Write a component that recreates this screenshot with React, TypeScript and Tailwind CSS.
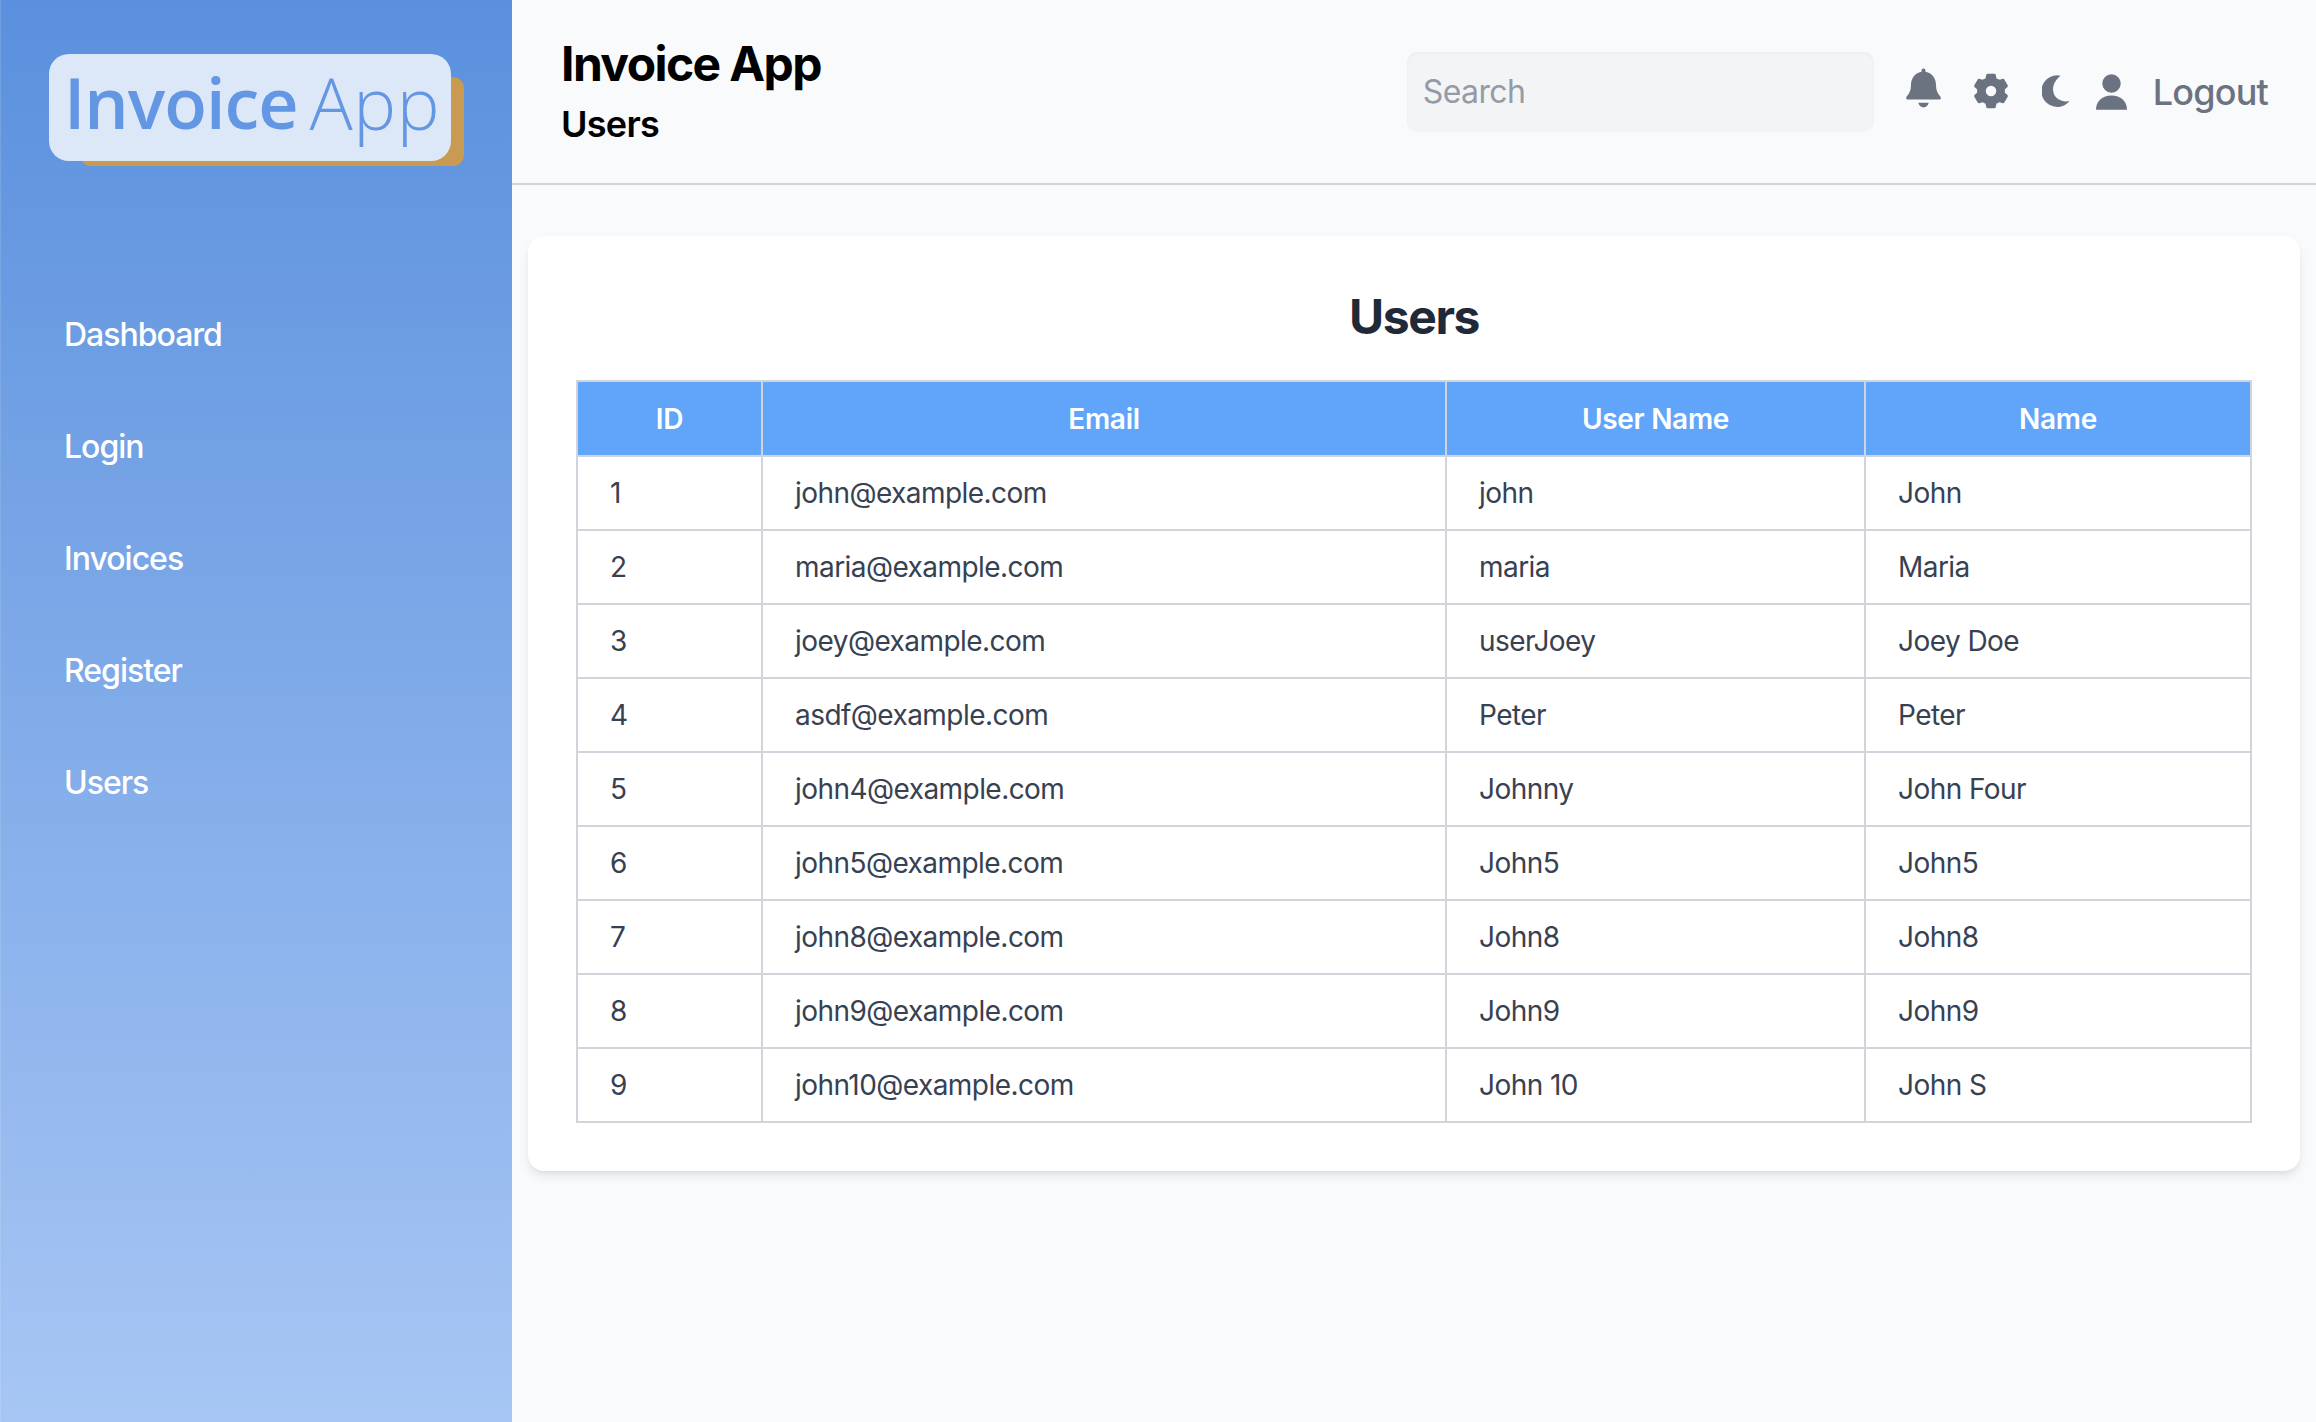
import React from "react";

const rows = [
  ["1", "john@example.com", "john", "John"],
  ["2", "maria@example.com", "maria", "Maria"],
  ["3", "joey@example.com", "userJoey", "Joey Doe"],
  ["4", "asdf@example.com", "Peter", "Peter"],
  ["5", "john4@example.com", "Johnny", "John Four"],
  ["6", "john5@example.com", "John5", "John5"],
  ["7", "john8@example.com", "John8", "John8"],
  ["8", "john9@example.com", "John9", "John9"],
  ["9", "john10@example.com", "John 10", "John S"],
];

const nav = ["Dashboard", "Login", "Invoices", "Register", "Users"];

function Bell() {
  return (
    <svg viewBox="47 38 106 120" className="w-[35px] h-[40px] fill-[#6b7280] mb-[7px]">
      <path d="M100 39a6 6 0 0 1 6 6v4c22 4 32 22 32 42c0 14 5 24 13 33c3 4 1 9-4 9H53c-5 0-7-5-4-9c8-9 13-19 13-33c0-20 10-38 32-42v-4a6 6 0 0 1 6-6z" />
      <path d="M84 143h32c-2 8-8 14-16 14s-14-6-16-14z" />
    </svg>
  );
}

function gearPath() {
  const c = 55;
  const pts: string[] = [];
  for (let i = 0; i < 6; i++) {
    const a = (i * 60 - 90) * (Math.PI / 180);
    const d = Math.PI / 180;
    const p = (r: number, o: number) =>
      `${(c + r * Math.cos(a + o * d)).toFixed(1)} ${(c + r * Math.sin(a + o * d)).toFixed(1)}`;
    pts.push(p(39, -20), p(50, -12), p(50, 12), p(39, 20));
  }
  return "M" + pts.join("L") + "Z";
}

function Gear() {
  return (
    <svg viewBox="0 0 110 110" className="w-[36px] h-[36px] mb-[2px]">
      <path d={gearPath()} className="fill-[#6b7280] stroke-[#6b7280]" strokeWidth="8" strokeLinejoin="round" />
      <circle cx="55" cy="55" r="16" className="fill-[#f9fafb]" />
    </svg>
  );
}

function Moon() {
  return (
    <svg viewBox="452 56 84 97" className="w-[28px] h-[32px] fill-[#6b7280] mb-[2px]">
      <path d="M508 58A48 48 0 1 0 535 135C510 140 485 125 485 100C485 82 495 68 508 58Z" />
    </svg>
  );
}

function User() {
  return (
    <svg viewBox="618 54 94 107" className="w-[31px] h-[36px] fill-[#6b7280]">
      <circle cx="665" cy="82" r="28" />
      <path d="M618 161c0-26 20-43 47-43s47 17 47 43z" />
    </svg>
  );
}

export default function App() {
  return (
    <div className="flex min-h-[1422px] w-[2316px] bg-[#f9fafb] font-['Inter',sans-serif]">
      <aside className="w-[512px] shrink-0 bg-gradient-to-b from-[#5a90dd] to-[#a7c6f4] shadow-[inset_1px_0_0_rgba(255,255,255,0.12)]">
        <div className="ml-[49px] mt-[54px] h-[107px] w-[402px] rounded-[20px] bg-[#dce8f8] shadow-[22px_14px_0_-9px_#c99a52] flex items-center pl-[15px] pb-[12px] text-[#6497e3] font-['Open_Sans',sans-serif] text-[70px] leading-none">
          <span className="font-semibold tracking-[-1px]">Invoice</span>
          <span className="font-light ml-[12px] text-[72px] tracking-[0.5px]">App</span>
        </div>
        <nav className="mt-[118px] pl-[64px] flex flex-col">
          {nav.map((n) => (
            <a key={n} className="h-[112px] flex items-center text-white text-[32px] font-medium tracking-[-1px]">
              {n}
            </a>
          ))}
        </nav>
      </aside>
      <main className="flex-1 min-w-0">
        <header className="h-[185px] border-b-2 border-[#d1d5db] flex items-center justify-between pl-[49px] pr-[48px]">
          <div className="flex flex-col">
            <h1 className="text-[48px] leading-[64px] font-bold text-black tracking-[-1.6px]">Invoice App</h1>
            <h2 className="text-[36px] leading-[56px] font-semibold text-black tracking-[-0.7px]">Users</h2>
          </div>
          <div className="flex items-center">
            <input
              readOnly
              placeholder="Search"
              className="w-[467px] h-[80px] rounded-[10px] bg-[#f3f4f6] px-[16px] text-[32px] tracking-[-0.6px] placeholder:text-[#959ba6] outline-none shadow-[inset_0_2px_3px_rgba(0,0,0,0.03)]"
            />
            <div className="ml-[32px] flex items-center gap-[32px]">
              <Bell />
              <Gear />
            </div>
            <div className="ml-[33px]"><Moon /></div>
            <div className="ml-[26px]"><User /></div>
            <span className="ml-[26px] text-[36px] font-medium text-[#6b7280] tracking-[-0.8px]">Logout</span>
          </div>
        </header>
        <section className="ml-[16px] mr-[16px] mt-[51px] rounded-[16px] bg-white p-[48px] shadow-[0_6px_12px_-2px_rgba(0,0,0,0.1),0_3px_6px_-3px_rgba(0,0,0,0.08)]">
          <h3 className="text-center text-[48px] leading-[64px] font-bold text-[#1f2937] mb-[31px] mt-[1px] tracking-[-1.4px]">Users</h3>
          <table className="w-full table-fixed border-collapse text-[28px] tracking-[-0.55px]">
            <colgroup>
              <col className="w-[185px]" />
              <col className="w-[684px]" />
              <col className="w-[419px]" />
              <col />
            </colgroup>
            <thead>
              <tr className="h-[75px] bg-[#60a5fa] text-white">
                {["ID", "Email", "User Name", "Name"].map((h) => (
                  <th key={h} className="border-2 border-[#d1d5db] font-semibold text-center tracking-[-0.3px]">{h}</th>
                ))}
              </tr>
            </thead>
            <tbody>
              {rows.map((r) => (
                <tr key={r[0]} className="h-[74px] text-[#374151]">
                  {r.map((c, i) => (
                    <td key={i} className="border-2 border-[#d1d5db] pl-[32px]">{c}</td>
                  ))}
                </tr>
              ))}
            </tbody>
          </table>
        </section>
      </main>
    </div>
  );
}
